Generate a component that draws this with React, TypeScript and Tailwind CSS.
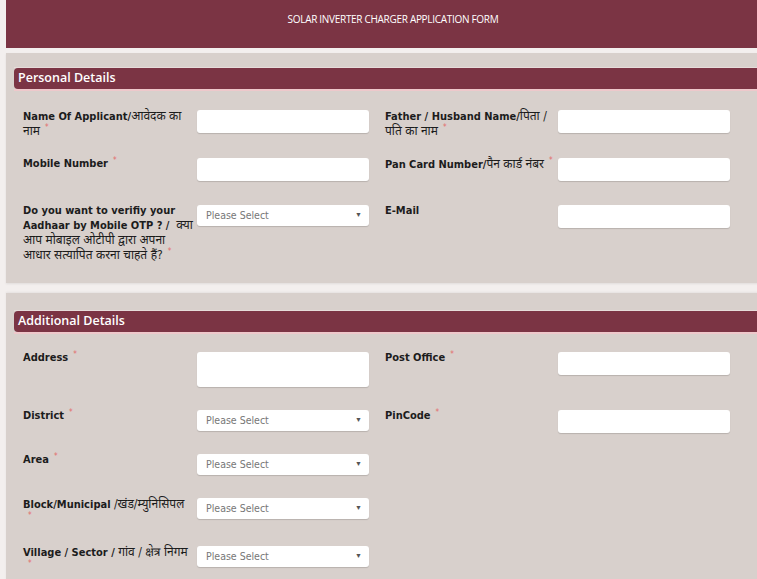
import React from 'react';

const labelFont = '"DejaVu Sans Condensed", "DejaVu Sans", "Noto Sans Devanagari", "Noto Sans", sans-serif';
const headFont = '"Open Sans", "Noto Sans", sans-serif';

function Star() {
  return <span className="ml-[5px] align-top text-[8px] font-normal leading-none text-[#e36b6b]">*</span>;
}

function Hi({ children }: { children: React.ReactNode }) {
  return <span className="text-[12px] font-normal">{children}</span>;
}

function TextBox({ tall }: { tall?: boolean }) {
  return (
    <div
      className={`w-[172px] rounded-[3px] bg-white shadow-[0_1px_1px_rgba(0,0,0,0.15)] ${tall ? 'h-[35px]' : 'h-[23px]'}`}
    />
  );
}

function SelectBox() {
  return (
    <div className="flex h-[21px] w-[172px] items-center justify-between rounded-[3px] bg-white pl-[9px] pr-[7px] shadow-[0_1px_1px_rgba(0,0,0,0.15)]">
      <span className="text-[10.5px] text-[#777]" style={{ fontFamily: labelFont }}>Please Select</span>
      <span className="text-[7px] text-[#555]">▼</span>
    </div>
  );
}

type Cell = { label: React.ReactNode; field: React.ReactNode };

function Row({ left, right, h }: { left: Cell; right?: Cell; h: string }) {
  return (
    <div className={`flex ${h}`}>
      <div className="flex w-[362px]">
        <div
          className="-mt-[1px] w-[174px] whitespace-nowrap text-[11px] font-bold leading-[14px] text-[#1c1c1c]"
          style={{ fontFamily: labelFont }}
        >
          {left.label}
        </div>
        <div>{left.field}</div>
      </div>
      {right && (
        <div className="flex">
          <div
            className="-mt-[1px] w-[173px] whitespace-nowrap text-[11px] font-bold leading-[14px] text-[#1c1c1c]"
            style={{ fontFamily: labelFont }}
          >
            {right.label}
          </div>
          <div>{right.field}</div>
        </div>
      )}
    </div>
  );
}

function SectionBar({ title }: { title: string }) {
  return (
    <div className="ml-[8px] border-t border-[#e6dcda] shadow-[0_2px_0_#eec8cb]">
      <div
        className="flex h-[21px] items-center rounded-l-[4px] bg-[#7b3444] pl-[4px] text-[12.5px] font-semibold text-white"
        style={{ fontFamily: headFont }}
      >
        {title}
      </div>
    </div>
  );
}

export default function App() {
  return (
    <div className="h-[579px] w-[757px] overflow-hidden bg-[#f3efee]">
      <div className="w-[780px]">
        <div
          className="ml-[6px] flex h-[48px] justify-center bg-[#7b3444] pt-[12px] text-[10px] tracking-[-0.3px] text-white"
          style={{ fontFamily: headFont }}
        >
          SOLAR INVERTER CHARGER APPLICATION FORM
        </div>

        <div className="ml-[6px] mt-[5px] h-[230px] bg-[#d8d0cc] pt-[14px] shadow-[0_1px_2px_rgba(0,0,0,0.08)]">
          <SectionBar title="Personal Details" />
          <div className="mt-[21px] pl-[17px]">
            <Row
              h="h-[48px]"
              left={{
                label: (
                  <>
                    Name Of Applicant/<Hi>आवेदक का</Hi>
                    <br />
                    <Hi>नाम</Hi>
                    <Star />
                  </>
                ),
                field: <TextBox />,
              }}
              right={{
                label: (
                  <>
                    Father / Husband Name/<Hi>पिता /</Hi>
                    <br />
                    <Hi>पति का नाम</Hi>
                    <Star />
                  </>
                ),
                field: <TextBox />,
              }}
            />
            <Row
              h="h-[47px]"
              left={{
                label: (
                  <>
                    Mobile Number
                    <Star />
                  </>
                ),
                field: <TextBox />,
              }}
              right={{
                label: (
                  <>
                    Pan Card Number/<Hi>पैन कार्ड नंबर</Hi>
                    <Star />
                  </>
                ),
                field: <TextBox />,
              }}
            />
            <Row
              h="h-[60px]"
              left={{
                label: (
                  <>
                    Do you want to verifiy your
                    <br />
                    Aadhaar by Mobile OTP ? / <Hi>&nbsp;क्या</Hi>
                    <br />
                    <Hi>आप मोबाइल ओटीपी द्वारा अपना</Hi>
                    <br />
                    <Hi>आधार सत्यापित करना चाहते हैं?</Hi>
                    <Star />
                  </>
                ),
                field: <SelectBox />,
              }}
              right={{
                label: <>E-Mail</>,
                field: <TextBox />,
              }}
            />
          </div>
        </div>

        <div className="ml-[6px] mt-[10px] h-[300px] bg-[#d8d0cc] pt-[17px] shadow-[0_-1px_2px_rgba(0,0,0,0.06)]">
          <SectionBar title="Additional Details" />
          <div className="mt-[20px] pl-[17px]">
            <Row
              h="h-[58px]"
              left={{
                label: (
                  <>
                    Address
                    <Star />
                  </>
                ),
                field: <TextBox tall />,
              }}
              right={{
                label: (
                  <>
                    Post Office
                    <Star />
                  </>
                ),
                field: <TextBox />,
              }}
            />
            <Row
              h="h-[44px]"
              left={{
                label: (
                  <>
                    District
                    <Star />
                  </>
                ),
                field: <SelectBox />,
              }}
              right={{
                label: (
                  <>
                    PinCode
                    <Star />
                  </>
                ),
                field: <TextBox />,
              }}
            />
            <Row
              h="h-[44px]"
              left={{
                label: (
                  <>
                    Area
                    <Star />
                  </>
                ),
                field: <SelectBox />,
              }}
            />
            <Row
              h="h-[48px]"
              left={{
                label: (
                  <>
                    Block/Municipal <Hi>/खंड/म्युनिसिपल</Hi>
                    <br />
                    <Star />
                  </>
                ),
                field: <SelectBox />,
              }}
            />
            <Row
              h="h-[48px]"
              left={{
                label: (
                  <>
                    Village / Sector / <Hi>गांव / क्षेत्र निगम</Hi>
                    <br />
                    <Star />
                  </>
                ),
                field: <SelectBox />,
              }}
            />
          </div>
        </div>
      </div>
    </div>
  );
}
